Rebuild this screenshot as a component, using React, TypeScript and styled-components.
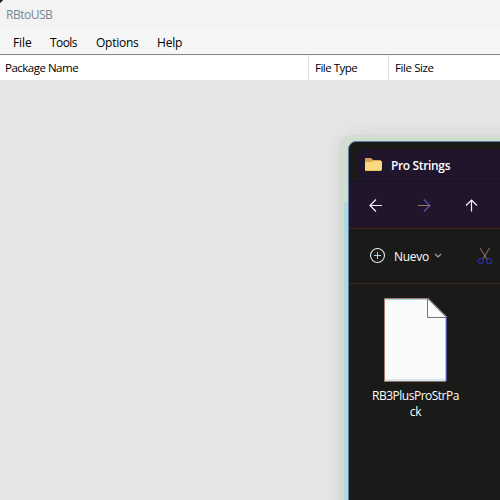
import React from 'react';
import styled, { createGlobalStyle } from 'styled-components';

const GlobalStyle = createGlobalStyle`
  * { box-sizing: border-box; }
  body { margin: 0; overflow: hidden; }
  svg { display: block; flex: none; }
`;

const Desktop = styled.div`
  position: relative;
  width: 500px;
  height: 500px;
  overflow: hidden;
  background: #e6e6e6;
  font-family: 'Open Sans', 'Noto Sans', sans-serif;
  font-size: 12px;
  line-height: 16px;
  color: #000;
`;

const Label = styled.span<{ $spacing?: number; $size?: number }>`
  white-space: nowrap;
  font-size: ${(p) => p.$size ?? 12}px;
  letter-spacing: ${(p) => p.$spacing ?? 0}px;
`;

const TitleBar = styled.header`
  display: flex;
  align-items: center;
  height: 30px;
  padding: 0 0 0 6px;
  background: linear-gradient(135deg, #1c1c1c 0 1.8px, #f3f3f3 2.8px);
  color: #778899;
`;

const MenuBar = styled.nav`
  display: flex;
  align-items: center;
  height: 25px;
  padding-top: 1px;
  background: #f6f6f6;
  border-bottom: 1px solid #828790;
`;

const MenuItem = styled.div<{ $width: number }>`
  width: ${(p) => p.$width}px;
  padding-left: 13px;
`;

const ColumnHeaders = styled.div`
  display: grid;
  grid-template-columns: 309px 80px 1fr;
  height: 25px;
  background: #fff;
`;

const ColumnHeader = styled.div<{ $indent: number }>`
  display: flex;
  align-items: center;
  padding: 0 0 1px ${(p) => p.$indent}px;
  border-right: 1px solid #e0e0e0;
  border-top: 1px solid #fafafa;

  &:last-child { border-right: 0; }
`;

const Explorer = styled.section`
  position: absolute;
  left: 348px;
  top: 141px;
  width: 180px;
  height: 390px;
  display: flex;
  flex-direction: column;
  overflow: hidden;
  background: #1a1a18;
  border: 1px solid #5f7da5;
  border-radius: 8px 0 0 0;
  color: #fff;
`;

const Glow = styled.div`
  position: absolute;
  left: 339px;
  top: 135px;
  width: 190px;
  height: 400px;
  border-radius: 13px 0 0 0;
  background: #d2ddd2;
  box-shadow: 0 0 22px rgba(0, 0, 0, 0.07);
`;

const EdgeTint = styled.div`
  position: absolute;
  left: 344px;
  top: 202px;
  width: 4px;
  height: 298px;
  background: #b4d6e0;
`;

const TabStrip = styled.div`
  display: flex;
  height: 39px;
  padding: 7px 0 0 8px;
`;

const Tab = styled.div`
  display: flex;
  flex: 1;
  align-items: center;
  gap: 9px;
  padding: 1px 0 0 8px;
  background: #21152b;
  border-radius: 7px 0 0 0;
  font-weight: 600;

  svg { margin-bottom: 3px; }
`;

const NavigationBar = styled.div`
  display: flex;
  align-items: center;
  gap: 32px;
  height: 48px;
  padding: 0 0 1px 19px;
  background: #21152b;
  border-top: 1px solid #1a111f;
  border-bottom: 1px solid #3c2618;
`;

const CommandBar = styled.div`
  display: flex;
  align-items: center;
  height: 55px;
  padding-left: 20px;
  border-bottom: 1px solid #38291a;
`;

const NewButton = styled.div`
  display: flex;
  align-items: center;
`;

const NewCaption = styled.div`
  padding: 2px 5px 0 8px;
`;

const Divider = styled.div`
  width: 1px;
  height: 31px;
  margin: 0 18px 0 16px;
  background: #2a172a;
`;

const Files = styled.div`
  padding: 14px 0 0 17px;
`;

const FileItem = styled.div`
  display: flex;
  flex-direction: column;
  align-items: center;
  width: 99px;
  gap: 6px;
`;

const FileName = styled.div`
  display: flex;
  flex-direction: column;
  align-items: center;
  line-height: 16px;
`;

const FolderIcon = () => (
  <svg width="17" height="14" viewBox="0 0 17 14">
    <path d="M0 2Q0 1 1 1H6L8 3H15Q16 3 16 4V11H0Z" fill="#d9a452" />
    <path d="M0 5H6L8 4H16Q17 4 17 5V12Q17 14 15 14H1Q0 14 0 13Z" fill="#fbd982" />
    <path d="M1 13.5H16" stroke="#efc267" />
  </svg>
);

const BackIcon = () => (
  <svg width="16" height="16" viewBox="0 0 16 16" fill="none" stroke="#f4f1f6" strokeWidth="1.2">
    <path d="M14 8.5H2.5M8 2.5L2 8.5L8 14.5" />
  </svg>
);

const ForwardIcon = () => (
  <svg width="16" height="16" viewBox="0 0 16 16" fill="none">
    <path d="M8 2.5L14 8.5L8 14.5" stroke="#5a51b0" strokeWidth="1.2" />
    <path d="M2 8.5H13.5" stroke="#9a7768" />
  </svg>
);

const UpIcon = () => (
  <svg width="16" height="16" viewBox="0 0 16 16" fill="none" stroke="#f4f1f6" strokeWidth="1.2">
    <path d="M7.5 14.5V3M2 8.5L7.5 3L13 8.5" />
  </svg>
);

const NewIcon = () => (
  <svg width="17" height="17" viewBox="0 0 17 17" fill="none">
    <circle cx="8.5" cy="7.5" r="7" stroke="#dfe3e3" strokeWidth="1.1" />
    <path d="M8.5 4V11M5 7.5H12" stroke="#a9d8f3" />
  </svg>
);

const ChevronIcon = () => (
  <svg width="8" height="6" viewBox="0 0 8 6" fill="none" stroke="#a1a1a1" strokeWidth="1.2">
    <path d="M1 1L4 4L7 1" />
  </svg>
);

const CutIcon = () => (
  <svg width="16" height="18" viewBox="0 0 16 18" fill="none">
    <path d="M3 1L10 12M12.5 1L6 12" stroke="#9a7767" />
    <circle cx="3.7" cy="14" r="2.5" stroke="#302e9d" strokeWidth="1.2" />
    <circle cx="12" cy="14" r="2.5" stroke="#302e9d" strokeWidth="1.2" />
  </svg>
);

const DocumentIcon = () => (
  <svg width="63" height="84" viewBox="0 0 63 84">
    <path d="M1 .5H44.5L62.5 18.5V83H1Z" fill="#fafafa" />
    <path d="M1.5 1.5H44M1.5 82H62" stroke="#add6df" />
    <path d="M.5 84V.5H44" fill="none" stroke="#a97970" />
    <path d="M0 83.5H62" stroke="#8c7065" />
    <path d="M44 .5L62 18.5" stroke="#777082" strokeWidth="1.2" />
    <path d="M62.3 19V83" stroke="#4c52a9" strokeWidth="1.3" />
    <path d="M43.5 1V19.5H62" fill="none" stroke="#77727b" />
  </svg>
);

const ExplorerWindow = () => (
  <>
    <Glow />
    <EdgeTint />
    <Explorer>
      <TabStrip>
        <Tab>
          <FolderIcon />
          <Label $spacing={-0.35}>Pro Strings</Label>
        </Tab>
      </TabStrip>
      <NavigationBar>
        <BackIcon />
        <ForwardIcon />
        <UpIcon />
      </NavigationBar>
      <CommandBar>
        <NewButton>
          <NewIcon />
          <NewCaption><Label $spacing={-0.3}>Nuevo</Label></NewCaption>
          <ChevronIcon />
        </NewButton>
        <Divider />
        <CutIcon />
      </CommandBar>
      <Files>
        <FileItem>
          <DocumentIcon />
          <FileName>
            <Label $spacing={-0.5}>RB3PlusProStrPa</Label>
            <Label $spacing={-0.2}>ck</Label>
          </FileName>
        </FileItem>
      </Files>
    </Explorer>
  </>
);

export default function App() {
  return (
    <>
      <GlobalStyle />
      <Desktop>
        <TitleBar>
          <Label $spacing={-0.5}>RBtoUSB</Label>
        </TitleBar>
        <MenuBar>
          <MenuItem $width={37}><Label $spacing={-0.1}>File</Label></MenuItem>
          <MenuItem $width={46}><Label $spacing={-0.6}>Tools</Label></MenuItem>
          <MenuItem $width={61}><Label $spacing={-0.25}>Options</Label></MenuItem>
          <MenuItem $width={60}><Label $spacing={-0.2}>Help</Label></MenuItem>
        </MenuBar>
        <ColumnHeaders>
          <ColumnHeader $indent={5}><Label $size={11.5} $spacing={-0.5}>Package Name</Label></ColumnHeader>
          <ColumnHeader $indent={6}><Label $size={11.5} $spacing={-0.5}>File Type</Label></ColumnHeader>
          <ColumnHeader $indent={6}><Label $size={11.5} $spacing={-0.4}>File Size</Label></ColumnHeader>
        </ColumnHeaders>
        <ExplorerWindow />
      </Desktop>
    </>
  );
}
